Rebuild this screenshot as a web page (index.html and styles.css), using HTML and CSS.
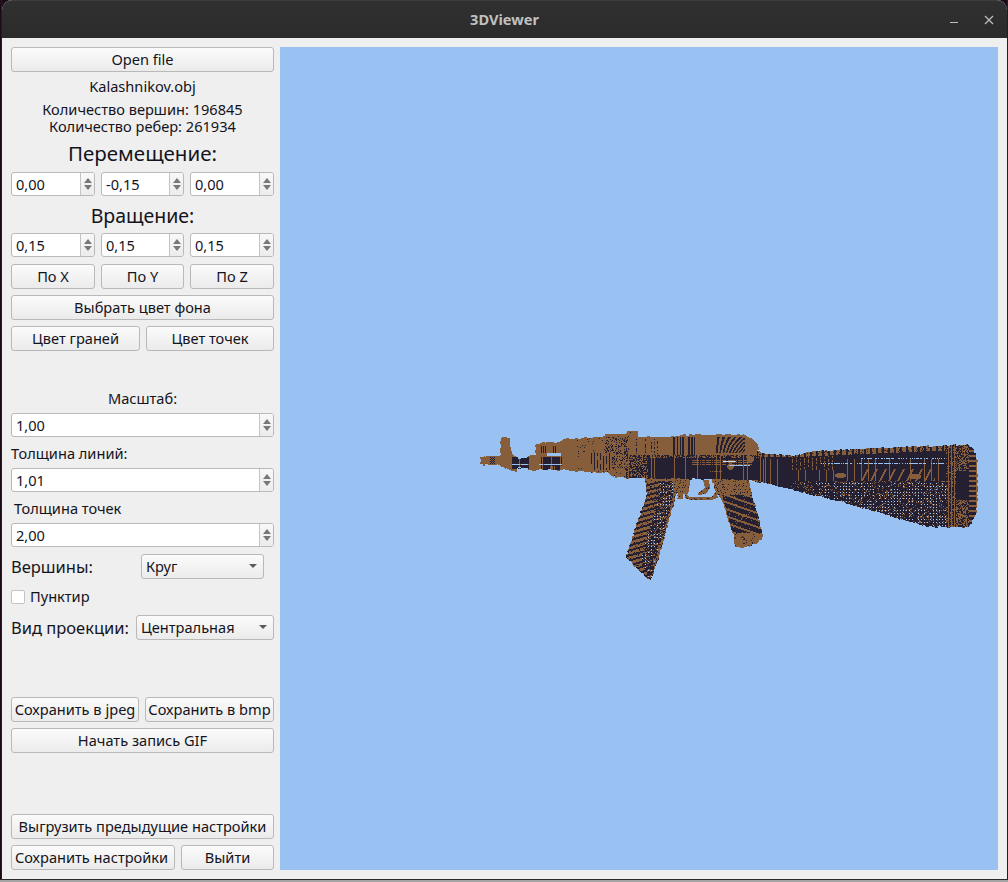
FILE: index.html
```html
<!DOCTYPE html>
<html lang="ru">
<head>
<meta charset="utf-8">
<title>3DViewer</title>
<link rel="stylesheet" href="styles.css">
</head>
<body>
<div class="window">
  <header class="titlebar">
    <span class="title">3DViewer</span>
    <div class="winctl">
      <svg class="min" width="10" height="10" viewBox="0 0 10 10"><path d="M1 7.5h8" stroke="#bdbdbd" stroke-width="1"/></svg>
      <svg class="close" width="12" height="12" viewBox="0 0 12 12"><path d="M2 2l8 8M10 2l-8 8" stroke="#bdbdbd" stroke-width="1.3"/></svg>
    </div>
  </header>
  <div class="content">
    <aside class="sidebar">
      <button class="btn">Open file</button>
      <div class="lbl center file">Kalashnikov.obj</div>
      <div class="lbl center counts">Количество вершин: 196845<br>Количество ребер: 261934</div>
      <div class="heading h-move">Перемещение:</div>
      <div class="row three r-move">
        <div class="spin"><span class="val">0,00</span><span class="arrows"><i class="up"></i><i class="down"></i></span></div>
        <div class="spin"><span class="val">-0,15</span><span class="arrows"><i class="up"></i><i class="down"></i></span></div>
        <div class="spin"><span class="val">0,00</span><span class="arrows"><i class="up"></i><i class="down"></i></span></div>
      </div>
      <div class="heading h-rot">Вращение:</div>
      <div class="row three r-rot">
        <div class="spin"><span class="val">0,15</span><span class="arrows"><i class="up"></i><i class="down"></i></span></div>
        <div class="spin"><span class="val">0,15</span><span class="arrows"><i class="up"></i><i class="down"></i></span></div>
        <div class="spin"><span class="val">0,15</span><span class="arrows"><i class="up"></i><i class="down"></i></span></div>
      </div>
      <div class="row three r-axis">
        <button class="btn">По X</button>
        <button class="btn">По Y</button>
        <button class="btn">По Z</button>
      </div>
      <button class="btn gap6">Выбрать цвет фона</button>
      <div class="row two gap6">
        <button class="btn">Цвет граней</button>
        <button class="btn">Цвет точек</button>
      </div>
      <div class="lbl center small s-scale">Масштаб:</div>
      <div class="spin gap6"><span class="val">1,00</span><span class="arrows"><i class="up"></i><i class="down"></i></span></div>
      <div class="lbl small s-line">Толщина линий:</div>
      <div class="spin gap7"><span class="val">1,01</span><span class="arrows"><i class="up"></i><i class="down"></i></span></div>
      <div class="lbl small s-line s-dot">Толщина точек</div>
      <div class="spin gap7"><span class="val">2,00</span><span class="arrows"><i class="up"></i><i class="down"></i></span></div>
      <div class="row vertex gap7">
        <span class="biglbl">Вершины:</span>
        <div class="combo combo-vertex"><span>Круг</span><i class="caret"></i></div>
      </div>
      <label class="check"><span class="box"></span><span class="lbl">Пунктир</span></label>
      <div class="row proj">
        <span class="biglbl">Вид проекции:</span>
        <div class="combo combo-proj"><span>Центральная</span><i class="caret"></i></div>
      </div>
      <div class="row save">
        <button class="btn jpeg">Сохранить в jpeg</button>
        <button class="btn bmp">Сохранить в bmp</button>
      </div>
      <button class="btn gap6">Начать запись GIF</button>
      <div class="spacer"></div>
      <button class="btn">Выгрузить предыдущие настройки</button>
      <div class="row bottom gap6">
        <button class="btn store">Сохранить настройки</button>
        <button class="btn quit">Выйти</button>
      </div>
    </aside>
    <main class="viewport">
      <canvas id="scene" width="718" height="823"></canvas>
    </main>
  </div>
</div>
<script src="scene.js"></script>
</body>
</html>
```
FILE: styles.css
```css
* { box-sizing: border-box; }
html, body { margin: 0; height: 100%; }
body {
  width: 1008px;
  height: 882px;
  overflow: hidden;
  padding: 0 1px 3px 2px;
  background:
    linear-gradient(#2c2c2c, #2c2c2c) 0 879px / 100% 1px no-repeat,
    linear-gradient(#a4a4a4, #a4a4a4) 0 880px / 100% 2px no-repeat,
    linear-gradient(#202020, #202020) 1px 0 / 1px 100% no-repeat,
    linear-gradient(#202020, #202020) 1007px 0 / 1px 100% no-repeat,
    #1c0a18;
  font-family: "Noto Sans", "Liberation Sans", sans-serif;
  font-size: 14.6px;
  color: #14141c;
}
.window {
  height: 879px;
  display: flex;
  flex-direction: column;
  background: #efefef;
  border-radius: 10px 10px 0 0;
}
.titlebar {
  height: 38px;
  flex: none;
  display: flex;
  align-items: center;
  justify-content: center;
  position: relative;
  background: linear-gradient(#303030, #2b2b2b);
  border-top: 1px solid #3d3d3d;
  border-radius: 10px 10px 0 0;
}
.title { font-weight: 700; font-size: 14.6px; color: #c0c0c0; margin-top: -1px; }
.winctl { position: absolute; top: 0; left: 947px; display: flex; }
.min { margin-top: 14px; }
.close { margin: 13px 0 0 24px; }
.content { flex: 1; display: flex; min-height: 0; padding: 9px; gap: 6px; }
.sidebar { width: 263px; flex: none; display: flex; flex-direction: column; }
.viewport { flex: 1; background: #99c1f1; min-width: 0; }
#scene { display: block; }

.btn {
  height: 25px;
  flex: none;
  padding: 0 0 1px;
  font: inherit;
  color: inherit;
  white-space: nowrap;
  border: 1px solid #b9b9b9;
  border-radius: 3px;
  background: linear-gradient(#fbfbfb, #ebebeb);
}
.lbl { line-height: 17px; }
.center { text-align: center; }
.file { margin-top: 5px; height: 20px; line-height: 18px; }
.counts { margin-top: 4px; line-height: 17px; }
.heading { text-align: center; font-size: 20px; line-height: 24px; }
.h-move { margin-top: 7px; font-size: 20.5px; line-height: 22px; height: 24px; }
.h-rot { margin-top: 8px; font-size: 19.5px; }
.row { display: flex; flex: none; }
.three { display: grid; grid-template-columns: 84px 83px 84px; gap: 6px; }
.two { display: grid; grid-template-columns: 129px 128px; gap: 6px; }
.r-move { margin-top: 6px; }
.r-rot { margin-top: 5px; }
.r-axis { margin-top: 7px; }
.gap6 { margin-top: 6px; }
.gap7 { margin-top: 7px; }
.small { line-height: 16px; height: 16px; }
.s-scale { margin-top: 39px; height: 17px; line-height: 17px; }
.s-line { margin-top: 8px; }
.s-dot { padding-left: 3px; }

.spin {
  height: 24px;
  flex: none;
  display: flex;
  align-items: center;
  background: #fff;
  border: 1px solid #b9b9b9;
  border-radius: 3px;
}
.val { flex: 1; padding-left: 4px; padding-bottom: 1px; }
.arrows {
  width: 14px;
  height: 100%;
  flex: none;
  display: flex;
  flex-direction: column;
  align-items: center;
  justify-content: center;
  gap: 2px;
  border-left: 1px solid #c4c4c4;
  border-radius: 0 2px 2px 0;
  background: linear-gradient(#f8f8f8, #ececec);
}
.up, .down { width: 0; height: 0; border-left: 4px solid transparent; border-right: 4px solid transparent; }
.up { border-bottom: 5px solid #777; }
.down { border-top: 5px solid #777; }

.biglbl { font-size: 16.5px; white-space: nowrap; line-height: 25px; }
.combo {
  height: 25px;
  display: flex;
  align-items: center;
  justify-content: space-between;
  padding: 0 5px 1px 4px;
  border: 1px solid #b9b9b9;
  border-radius: 3px;
  background: linear-gradient(#fbfbfb, #ebebeb);
}
.caret { width: 0; height: 0; margin-right: 1px; border-left: 4px solid transparent; border-right: 4px solid transparent; border-top: 4px solid #5a5a5a; }
.vertex { justify-content: space-between; padding-right: 10px; }
.combo-vertex { width: 123px; }
.proj { justify-content: space-between; margin-top: 11px; }
.combo-proj { width: 138px; }
.check { display: flex; align-items: center; gap: 5px; height: 14px; margin-top: 11px; flex: none; }
.check .lbl { margin-top: -1px; }
.box { width: 14px; height: 14px; background: #fff; border: 1px solid #c4c4c4; border-radius: 2px; }
.save { justify-content: space-between; margin-top: 57px; }
.jpeg { width: 128px; }
.bmp { width: 129px; }
.spacer { flex: 1; }
.bottom { justify-content: space-between; }
.store { width: 164px; padding-right: 3px; }
.quit { width: 93px; }
```
FILE: scene.js
```js
(function () {
  var OX = 280, OY = 47;
  var BROWN = [134, 94, 60], DARK = [36, 31, 49], SKY = [153, 193, 241];
  var ctx = document.getElementById('scene').getContext('2d');

  function inside(p, x, y) {
    var c = false;
    for (var i = 0, j = p.length - 1; i < p.length; j = i++) {
      if ((p[i][1] > y) !== (p[j][1] > y) &&
          x < (p[j][0] - p[i][0]) * (y - p[i][1]) / (p[j][1] - p[i][1]) + p[i][0]) c = !c;
    }
    return c;
  }
  function h(x, y) {
    var s = Math.sin(x * 12.9898 + y * 78.233) * 43758.5453;
    return s - Math.floor(s);
  }
  function block(x, y, n) { return h(Math.floor(x / n), Math.floor(y / n)); }

  var front = [[480,457],[486,456],[500,456],[501,438],[505,437],[510,438],[511,448],[513,455],[517,458],[528,458],[529,455],[535,455],[536,445],[540,443],[562,442],[563,439],[602,437],[606,434],[625,434],[628,431],[638,431],[639,437],[670,437],[680,435],[743,434],[750,438],[757,443],[758,448],[758,480],[625,478],[623,476],[617,478],[607,473],[575,471],[562,470],[538,470],[534,471],[528,470],[528,468],[517,468],[517,471],[512,471],[505,468],[498,465],[484,465],[480,463]];
  var gap = [[547,453],[561,453],[561,456],[547,456]];
  var mag = [[645,476],[678,476],[675,500],[655,570],[651,580],[646,578],[626,557],[647,494]];
  var well = [[675,476],[690,476],[688,494],[683,494],[682,500],[678,499],[677,492],[675,495]];
  var guard = [[685,493],[690,497],[712,497],[716,491],[718,498],[712,500],[690,500],[685,498]];
  var trig = [[703,480],[709,480],[710,488],[706,494],[698,495],[698,493],[705,488]];
  var grip = [[711,478],[748,478],[753,498],[762,530],[762,538],[758,543],[743,548],[735,546],[734,537],[722,500],[716,492]];
  var stock = [[752,449],[763,453],[793,456],[807,452],[850,449],[957,445],[968,444],[974,450],[977,460],[978,490],[977,510],[971,524],[967,527],[927,527],[853,505],[773,485],[752,481]];

  function frontTex(x, y) {
    // dark receiver band
    if (x > 625 && y >= 455 && y <= 479 && x <= 758) {
      if (y < 458 && h(x, y) < .45) return BROWN;
      if (x < 648 && h(x, y) < .4) return BROWN;
      if (x % 23 === 7 || x % 31 === 3) return BROWN;
      if (y > 459 && y < 466 && x > 690 && x < 752 && y % 2 === 0 && h(x, 3) < .7) return BROWN;
      if (y === 461 && x > 722 && x < 736) return [200, 215, 240];
      if (y === 465 && x > 728 && x < 750) return SKY;
      if (y === 471 && x > 708 && x < 722 && h(x, y) < .5) return BROWN;
      if ((x - 730) * (x - 730) + (y - 466) * (y - 466) < 12) return BROWN;
      if ((x - 750) * (x - 750) + (y - 459) * (y - 459) < 11) return BROWN;
      return DARK;
    }
    if (x >= 512 && x <= 528 && y >= 457 && y <= 468) {
      if (y === 464) return h(x, 1) < .2 ? BROWN : SKY;
      if (x % 11 === 2) return BROWN;
      return DARK;
    }
    if (x >= 538 && x <= 561 && y >= 457 && y <= 469) {
      if (y === 464) return h(x, 1) < .15 ? BROWN : SKY;
      if (x < 541 || x % 9 === 2) return BROWN;
      if (y > 465 && h(x, 2) < .2) return BROWN;
      return DARK;
    }
    // small clusters on sights / muzzle
    if (x > 489 && x < 495 && y > 456 && y < 464) return (x + y) % 2 ? DARK : BROWN;
    if (x > 539 && x < 546 && y > 445 && y < 453) return x % 2 ? DARK : BROWN;
    if (x > 552 && x < 556 && y > 445 && y < 453) return x % 2 ? DARK : BROWN;
    if (x > 590 && x < 612 && y > 452 && y < 470) return (x % 3 === 0 && h(x, Math.floor(y / 4)) < .75) ? DARK : BROWN;
    if (x > 604 && x < 628 && y > 436 && y < 470) return h(x, y) < .28 ? DARK : BROWN;
    if (x > 630 && x < 660 && y > 438 && y < 455) return (x % 3 === 0 && h(x, 7) < .7 && h(x, y) < .55) ? DARK : BROWN;
    if (x > 672 && x < 695 && y > 436 && y < 455) return (x % 3 !== 0 && h(x, 11) < .7) ? DARK : BROWN;
    if (x > 715 && x < 745 && y > 436 && y < 453) {
      var s = x + (y - 445) * (x - 715) / 28;
      return (Math.floor(s) % 4 < 2) ? DARK : BROWN;
    }
    if (x > 695 && x < 716 && y > 436 && y < 455) return BROWN;
    if (x > 575 && x < 640 && h(x, y) < .03) return DARK;
    return BROWN;
  }
  function magTex(x, y) {
    var t = (y - 476) / 104;
    var l = 645 - 19 * Math.max(0, (y - 494) / 63), r = 675 - 20 * Math.max(0, (y - 500) / 70);
    if (y > 557) l = 626 + (y - 557) * .87;
    var u = (x - l) / Math.max(1, r - l);
    if (y < 481) return h(x, y) < .12 ? DARK : BROWN;
    if (u > .9) return h(x, y) < .2 ? DARK : BROWN;
    var band = y + (x - 650) * .28;
    if (u < .45) {
      return (Math.floor(band) % 5 < 3 && h(x, y) < .9) ? BROWN : DARK;
    }
    if (x % 3 === 0 && y % 3 === 0 && h(x, y) < .6) return [170, 205, 244];
    if (Math.floor(band) % 5 === 0 && h(x, y) < .6) return BROWN;
    return (h(x + 3, y) < .25 - t * .1) ? BROWN : DARK;
  }
  function gripTex(x, y) {
    if (y < 495) return h(x, y) < .12 ? DARK : BROWN;
    if (y > 532) return h(x, y) < .06 ? DARK : BROWN;
    var band = y - (x - 735) * .35;
    var edgeL = x < 721 + (y - 492) * .27, edgeR = x > 751 + (y - 492) * .28;
    if (edgeL || edgeR) return BROWN;
    var m = ((Math.floor(band) % 7) + 7) % 7;
    return m < 2 ? BROWN : (h(x, y) < .05 ? BROWN : DARK);
  }
  function stockTex(x, y) {
    var topY = x < 807 ? 453 : 452 - (x - 807) * 7 / 161;
    var botY = 481 + Math.max(0, (x - 752)) * .305;
    if (x > 955) {
      if (x > 968) return (y % 5 < 2 || x > 975) ? BROWN : DARK;
      if (y > 470 && y < 500 && h(x, y) < .45) return DARK;
      return h(x, y) < .45 ? BROWN : DARK;
    }
    if (x > 945) return (x % 3 === 0 || h(x, y) < .25) ? BROWN : DARK;
    if (y < topY + 4) return (Math.floor(x / 2) % 3 !== 0 && h(x, y) < .85) ? BROWN : DARK;
    if (y > botY - 3) return (Math.floor(x / 2) % 3 === 0 || h(x, y) < .25) ? BROWN : DARK;
    if (y === 463 && x > 820 && x < 945 && h(x, 2) < .7) return SKY;
    if (y === 458 && x > 860 && x < 950 && h(x, 4) < .5) return SKY;
    if ((x - 840) * (x - 840) / 30 + (y - 475) * (y - 475) / 8 < 1) return BROWN;
    if ((x - 915) * (x - 915) / 30 + (y - 476) * (y - 476) / 9 < 1) return BROWN;
    if (y > 468 && y < 481 && x > 860 && x < 935 && ((x + (y - 474) * .5) % 9) < 2) return BROWN;
    if (y < 470 && x > 790 && x < 835) {
      if (x % 4 === 0 && h(x, y) < .6) return BROWN;
      return DARK;
    }
    if (y >= 481 && x > 790) {
      var d = (x > 800 + (y - 481) * 1.5);
      if (d && x % 3 === 0 && y % 3 === 0 && h(x, y) < .65) return [170, 205, 244];
      return h(x, y) < .14 ? BROWN : DARK;
    }
    if (x % 7 === 0 && h(x, 5) < .8 && y > 458) return BROWN;
    if (x < 770 && x % 5 === 0) return BROWN;
    return DARK;
  }

  var img = ctx.createImageData(718, 823);
  function put(x, y, c) {
    var i = ((y - OY) * 718 + (x - OX)) * 4;
    img.data[i] = c[0]; img.data[i + 1] = c[1]; img.data[i + 2] = c[2]; img.data[i + 3] = 255;
  }
  for (var y = 425; y < 590; y++) {
    for (var x = 470; x < 990; x++) {
      var px = x + .5, py = y + .5, c = null;
      // rough mesh edge: shift sampling a little by block noise
      var jx = px + (block(x, y, 3) - .5) * 1.4, jy = py + (block(x + 7, y, 3) - .5) * 1.4;
      if (inside(stock, jx, jy)) c = stockTex(x, y);
      if (inside(grip, jx, jy)) c = gripTex(x, y);
      if (inside(mag, jx, jy)) c = magTex(x, y);
      if (inside(well, jx, jy) || inside(guard, px, py) || inside(trig, px, py)) c = h(x, y) < .08 ? DARK : BROWN;
      if (inside(front, jx, jy) && !inside(gap, px, py)) c = frontTex(x, y);
      if (c) put(x, y, c);
    }
  }
  ctx.putImageData(img, 0, 0);
})();
```
